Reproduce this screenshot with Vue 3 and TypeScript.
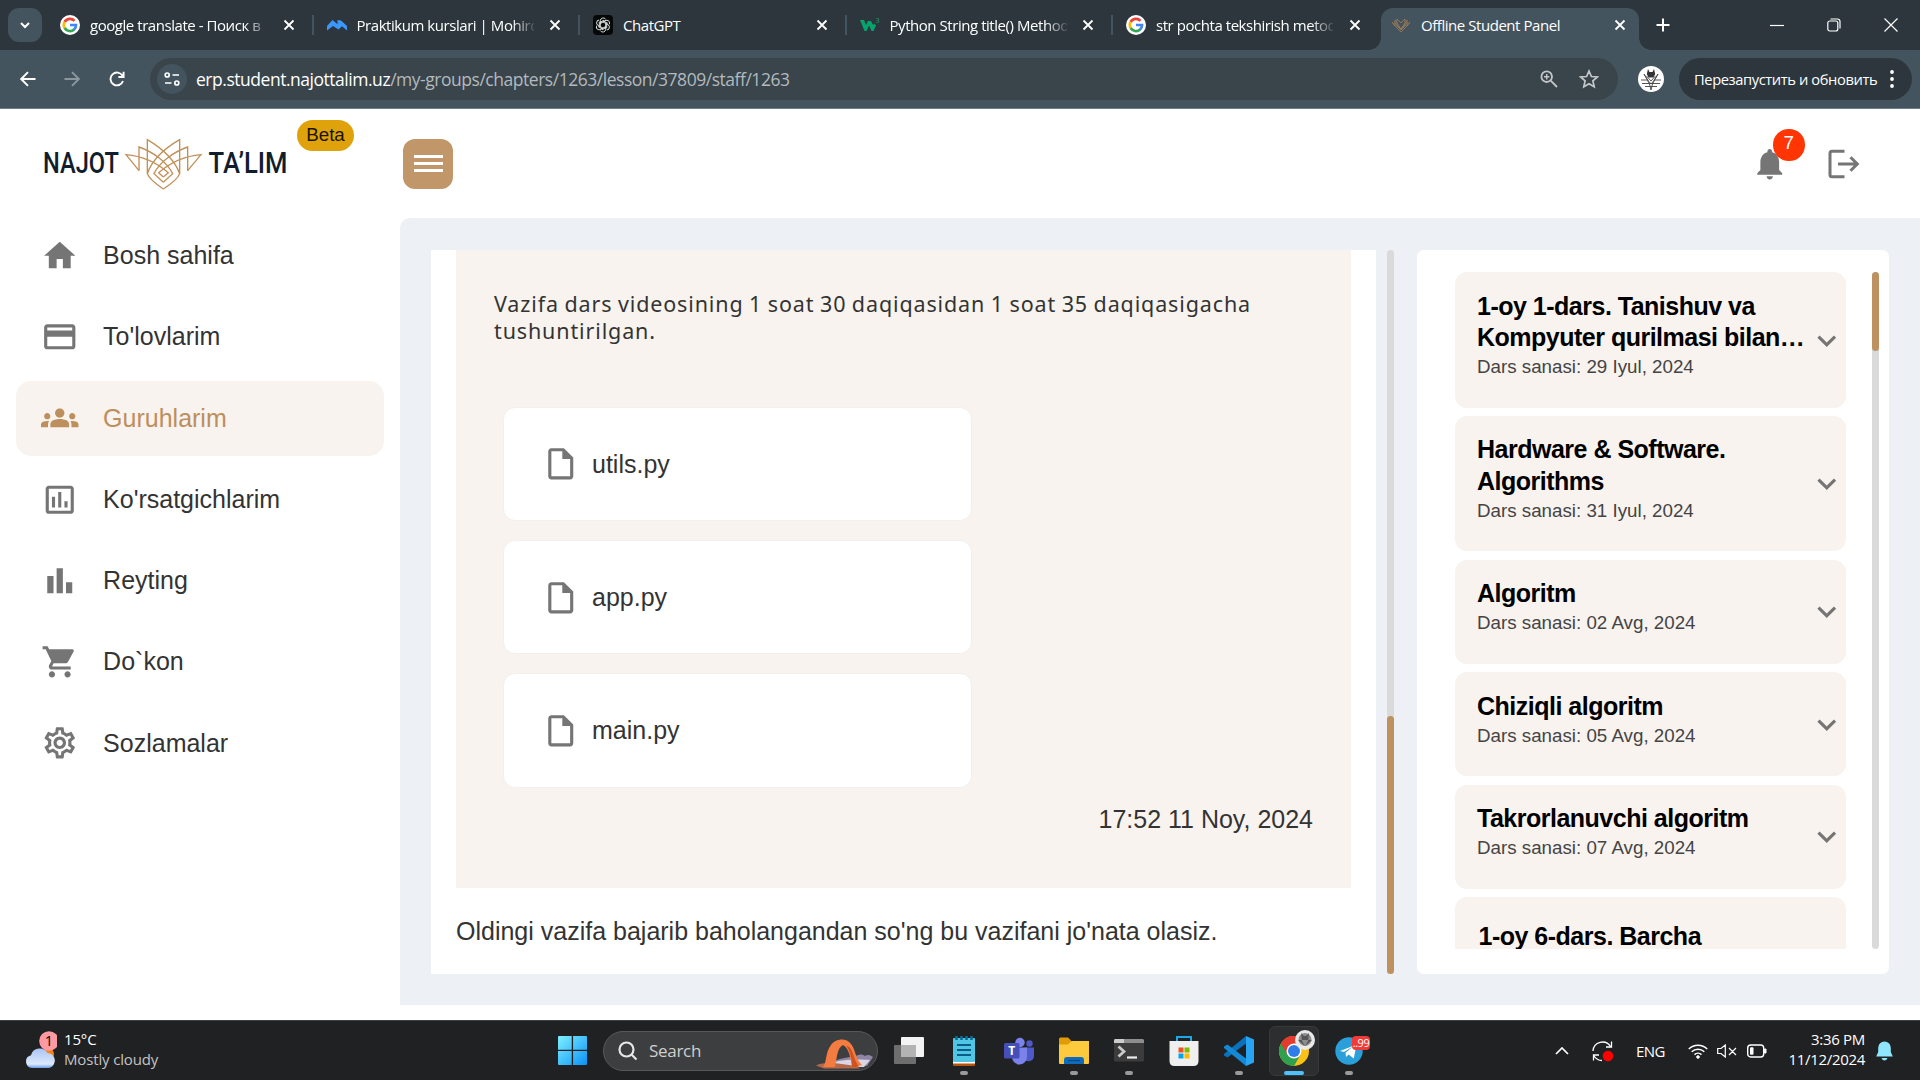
<script setup lang="ts">
interface Tab { title: string; icon: string }
interface NavItem { label: string; path: string; active?: boolean }
interface Lesson { title: string; date: string; low?: boolean }

const tabs: Tab[] = [
  { title: 'google translate - Поиск в', icon: 'google' },
  { title: 'Praktikum kurslari | Mohird', icon: 'mohir' },
  { title: 'ChatGPT', icon: 'gpt' },
  { title: 'Python String title() Method', icon: 'w3' },
  { title: 'str pochta tekshirish metod', icon: 'google' },
]

const nav: NavItem[] = [
  { label: 'Bosh sahifa', path: 'M10 20v-6h4v6h5v-8h3L12 3 2 12h3v8z' },
  { label: "To'lovlarim", path: 'M20 4H4c-1.11 0-1.99.89-1.99 2L2 18c0 1.11.89 2 2 2h16c1.11 0 2-.89 2-2V6c0-1.11-.89-2-2-2zm0 14H4v-6h16v6zm0-10H4V6h16v2z' },
  { label: 'Guruhlarim', active: true, path: 'M12 12.75c1.63 0 3.07.39 4.24.9 1.08.48 1.76 1.56 1.76 2.73V18H6v-1.61c0-1.18.68-2.26 1.76-2.73 1.17-.52 2.61-.91 4.24-.91zM4 13c1.1 0 2-.9 2-2s-.9-2-2-2-2 .9-2 2 .9 2 2 2zm1.13 1.1c-.37-.06-.74-.1-1.13-.1-.99 0-1.93.21-2.78.58C.48 14.9 0 15.62 0 16.43V18h4.5v-1.61c0-.83.23-1.61.63-2.29zM20 13c1.1 0 2-.9 2-2s-.9-2-2-2-2 .9-2 2 .9 2 2 2zm4 3.43c0-.81-.48-1.53-1.22-1.85-.85-.37-1.79-.58-2.78-.58-.39 0-.76.04-1.13.1.4.68.63 1.46.63 2.29V18H24v-1.57zM12 6c1.66 0 3 1.34 3 3s-1.34 3-3 3-3-1.34-3-3 1.34-3 3-3z' },
  { label: "Ko'rsatgichlarim", path: 'M9 17H7v-7h2v7zm4 0h-2V7h2v10zm4 0h-2v-4h2v4zm2 2H5V5h14v14zm0-16H5c-1.100 0-2 .9-2 2v14c0 1.100.9 2 2 2h14c1.100 0 2-.9 2-2V5c0-1.100-.9-2-2-2z' },
  { label: 'Reyting', path: 'M4 9h4v11H4zM10 4h4v16h-4zM16 13h4v7h-4z' },
  { label: 'Do`kon', path: 'M7 18c-1.1 0-1.99.9-1.99 2S5.9 22 7 22s2-.9 2-2-.9-2-2-2zM1 2v2h2l3.6 7.59-1.35 2.45c-.16.28-.25.61-.25.96 0 1.1.9 2 2 2h12v-2H7.42c-.14 0-.25-.11-.25-.25l.03-.12.9-1.63h7.45c.75 0 1.41-.41 1.75-1.03l3.58-6.49A1.003 1.003 0 0 0 20 4H5.21l-.94-2H1zm16 16c-1.1 0-1.99.9-1.99 2s.89 2 1.99 2 2-.9 2-2-.9-2-2-2z' },
  { label: 'Sozlamalar', path: 'M19.43 12.98c.04-.32.07-.64.07-.98 0-.34-.03-.66-.07-.98l2.11-1.65c.19-.15.24-.42.12-.64l-2-3.46c-.09-.16-.26-.25-.44-.25-.06 0-.12.01-.17.03l-2.49 1c-.52-.4-1.08-.73-1.69-.98l-.38-2.65C14.46 2.18 14.25 2 14 2h-4c-.25 0-.46.18-.49.42l-.38 2.65c-.61.25-1.17.59-1.69.98l-2.49-1c-.06-.02-.12-.03-.18-.03-.17 0-.34.09-.43.25l-2 3.46c-.13.22-.07.49.12.64l2.11 1.65c-.04.32-.07.65-.07.98 0 .33.03.66.07.98l-2.11 1.65c-.19.15-.24.42-.12.64l2 3.46c.09.16.26.25.44.25.06 0 .12-.01.17-.03l2.49-1c.52.4 1.08.73 1.69.98l.38 2.65c.03.24.24.42.49.42h4c.25 0 .46-.18.49-.42l.38-2.65c.61-.25 1.17-.59 1.69-.98l2.49 1c.06.02.12.03.18.03.17 0 .34-.09.43-.25l2-3.46c.12-.22.07-.49-.12-.64l-2.11-1.65zm-1.98-1.71c.04.31.05.52.05.73 0 .21-.02.43-.05.73l-.14 1.13.89.7 1.08.84-.7 1.21-1.27-.51-1.04-.42-.9.68c-.43.32-.84.56-1.25.73l-1.06.43-.16 1.13-.2 1.35h-1.4l-.19-1.35-.16-1.13-1.06-.43c-.43-.18-.83-.41-1.23-.71l-.91-.7-1.06.43-1.27.51-.7-1.21 1.08-.84.89-.7-.14-1.13c-.03-.31-.05-.54-.05-.74s.02-.43.05-.73l.14-1.13-.89-.7-1.08-.84.7-1.21 1.27.51 1.04.42.9-.68c.43-.32.84-.56 1.25-.73l1.06-.43.16-1.13.2-1.35h1.39l.19 1.35.16 1.13 1.06.43c.43.18.83.41 1.23.71l.91.7 1.06-.43 1.27-.51.7 1.21-1.07.85-.89.7.14 1.13zM12 8c-2.21 0-4 1.79-4 4s1.79 4 4 4 4-1.79 4-4-1.79-4-4-4zm0 6c-1.1 0-2-.9-2-2s.9-2 2-2 2 .9 2 2-.9 2-2 2z' },
]

const files: string[] = ['utils.py', 'app.py', 'main.py']

const lessons: Lesson[] = [
  { title: '1-oy 1-dars. Tanishuv va Kompyuter qurilmasi bilan…', date: '29 Iyul, 2024' },
  { title: 'Hardware & Software. Algorithms', date: '31 Iyul, 2024' },
  { title: 'Algoritm', date: '02 Avg, 2024' },
  { title: 'Chiziqli algoritm', date: '05 Avg, 2024' },
  { title: 'Takrorlanuvchi algoritm', date: '07 Avg, 2024' },
  { title: '1-oy 6-dars. Barcha', date: '09 Avg, 2024', low: true },
]
</script>

<template>
  <div class="screen">
    <!-- browser tabs -->
    <div class="tabstrip">
      <div class="tab-search">
        <svg width="14" height="14" viewBox="0 0 14 14"><path d="M3 5l4 4 4-4" fill="none" stroke="#fff" stroke-width="2" /></svg>
      </div>
      <div v-for="(t, i) in tabs" :key="t.title" class="tab" :class="{ first: i === 0, last: i === 4 }">
        <svg v-if="t.icon === 'google'" class="fav" viewBox="0 0 20 20">
          <circle cx="10" cy="10" r="10" fill="#fff" />
          <g fill="none" stroke-width="2.700">
            <path d="M4.650 7A6.100 6.100 0 0 1 14.500 5.800" stroke="#ea4335" />
            <path d="M4.700 13.050A6.100 6.100 0 0 1 4.650 6.950" stroke="#fbbc05" />
            <path d="M14.100 14.500A6.100 6.100 0 0 1 4.650 13" stroke="#34a853" />
            <path d="M10 10H16A6.100 6.100 0 0 1 13.900 14.700" stroke="#4285f4" />
          </g>
        </svg>
        <svg v-else-if="t.icon === 'mohir'" class="fav" viewBox="0 0 20 20">
          <path d="M0 15.500V11L5.500 5l5 4.300V5L14 5.500l6 5.500v4.500l-5-4.200-3.500 3.200L6 11z" fill="#3b97fb" />
        </svg>
        <svg v-else-if="t.icon === 'gpt'" class="fav" viewBox="0 0 20 20">
          <rect width="20" height="20" rx="4" fill="#060808" />
          <g fill="none" stroke="#d8dcdd" stroke-width="1">
            <path v-for="a in 6" :key="a" :transform="`rotate(${a * 60} 10 10)`" d="M7.300 8.500V5.600a2.900 2.900 0 0 1 5.200-1.500M10 6.900l3.700 2.100v4.300" />
          </g>
        </svg>
        <svg v-else class="fav" viewBox="0 0 20 20">
          <path d="M0 5h4l2 5 2-4h3l2 4 1-1.500 2 2L13.500 16h-2L9 10.500 6.500 16h-2z" fill="#05a46c" />
          <text x="15.500" y="8" font-size="7" fill="#05a46c" font-family="Noto Sans">3</text>
        </svg>
        <span class="tab-title" :class="{ fade: t.icon !== 'gpt' }">{{ t.title }}</span>
        <svg class="close" viewBox="0 0 12 12"><path d="M1.500 1.500l9 9M10.500 1.500l-9 9" stroke="#fff" stroke-width="1.800" /></svg>
      </div>
      <div class="tab active">
        <svg class="fav" viewBox="0 0 20 20"><g fill="none" stroke="#8f7658" stroke-width="1"><path d="M1 7l3 4V5l6 9 6-9v6l3-4-4 5-5 5-5-5zM6 4v7l4 4 4-4V4l-4 4zM3 7l7 7 7-7" /></g></svg>
        <span class="tab-title">Offline Student Panel</span>
        <svg class="close" viewBox="0 0 12 12"><path d="M1.500 1.500l9 9M10.500 1.500l-9 9" stroke="#fff" stroke-width="1.800" /></svg>
      </div>
      <svg class="plus" viewBox="0 0 14 14"><path d="M7 .5v13M.5 7h13" stroke="#fff" stroke-width="2" /></svg>
      <div class="winctl">
        <svg width="14" height="14" viewBox="0 0 14 14"><path d="M0 7.500h14" stroke="#fff" stroke-width="1.200" /></svg>
        <svg width="14" height="14" viewBox="0 0 14 14"><path d="M3.500 1h7a2.500 2.500 0 0 1 2.500 2.500v7" fill="none" stroke="#fff" stroke-width="1.200" /><rect x=".8" y="3" width="10" height="10" rx="2" fill="none" stroke="#fff" stroke-width="1.200" /></svg>
        <svg width="14" height="14" viewBox="0 0 14 14"><path d="M.5.5l13 13M13.500.5l-13 13" stroke="#fff" stroke-width="1.200" /></svg>
      </div>
    </div>

    <!-- address bar -->
    <div class="toolbar">
      <svg class="tb back" viewBox="0 0 16 16"><path d="M15.500 8H1.500M8 1.200L1.200 8 8 14.800" fill="none" stroke="#fff" stroke-width="1.900" /></svg>
      <svg class="tb fwd" viewBox="0 0 16 16"><path d="M.5 8h14M8 1.200L14.800 8 8 14.800" fill="none" stroke="#8a979e" stroke-width="1.900" /></svg>
      <svg class="tb rel" viewBox="0 0 16 16"><path d="M14 10A6.400 6.400 0 1 1 13.500 4.800M14.600 .8V6H9.400" fill="none" stroke="#fff" stroke-width="1.900" /></svg>
      <div class="omni">
        <div class="site">
          <svg width="16" height="16" viewBox="0 0 16 16" fill="none" stroke="#fff" stroke-width="1.700"><circle cx="3.200" cy="4" r="2" /><path d="M8.500 4H15M1 12h6.500" /><circle cx="12.800" cy="12" r="2" /></svg>
        </div>
        <div class="url"><b>erp.student.najottalim.uz</b>/my-groups/chapters/1263/lesson/37809/staff/1263</div>
        <svg class="mag" viewBox="0 0 18 18" fill="none" stroke="#c4c7c9" stroke-width="1.800"><circle cx="6.700" cy="6.700" r="5.300" /><path d="M10.700 10.700L17 17" /><path d="M6.700 4v5.400M4 6.700h5.400" stroke-width="1.500" /></svg>
        <svg class="star" viewBox="0 0 20 20"><path d="M10 2l2.400 5.500 6 .5-4.500 3.900 1.300 5.900L10 14.700l-5.200 3.100 1.300-5.900L1.600 8l6-.5z" fill="none" stroke="#c4c7c9" stroke-width="1.700" /></svg>
      </div>
      <svg class="avatar" viewBox="0 0 26 26">
        <circle cx="13" cy="13" r="13" fill="#fff" />
        <path d="M10 3l1.500 3h3L16 3l1.200 5-1.700 3.500h-5L8.800 8z" fill="#333" />
        <path d="M6 8l5.500 10 1.500 6 1.500-6L20 8l-4.500 7-2.500 3-2.500-3zM3 14h6M17 14h6M4 17.500h18M7 20.500h12M8.500 10l4.500 5 4.500-5" fill="none" stroke="#444" stroke-width=".9" />
      </svg>
      <div class="update"><span>Перезапустить и обновить</span>
        <svg width="4" height="18" viewBox="0 0 4 18" fill="#fff"><circle cx="2" cy="2" r="1.900" /><circle cx="2" cy="9" r="1.900" /><circle cx="2" cy="16" r="1.900" /></svg>
      </div>
    </div>

    <!-- web page -->
    <div class="page">
      <aside class="side">
        <div class="brand">
          <svg class="logo" width="244" height="56" viewBox="0 0 244 56">
            <g font-family="Roboto, sans-serif" font-size="29" font-weight="500" fill="#101d2d">
              <text x="-1" y="36" textLength="76" lengthAdjust="spacingAndGlyphs">NAJOT</text>
              <text x="164.500" y="36" textLength="79" lengthAdjust="spacingAndGlyphs">TA’LIM</text>
            </g>
            <!-- lotus mark: three mirrored petals over a nested diamond -->
            <g transform="translate(-44 -29) scale(.33333)" fill="none" stroke="#c1905a" stroke-width="4">
              <path d="M417 188L378 140C425 144 470 164 505 194L490 207" />
              <path d="M417 188V117C460 132 500 162 518 197L490 223" />
              <path d="M490 243C462 224 446 210 442 197V95C486 121 524 156 539 197C535 210 519 224 490 243" />
              <path d="M563 188L603 140C555 144 511 164 476 194L490 207" />
              <path d="M563 188V117C520 132 480 162 462 197L490 223" />
              <path d="M539 197V95C494 121 456 156 442 197" />
            </g>
          </svg>
          <span class="beta">Beta</span>
        </div>
        <nav>
          <div v-for="n in nav" :key="n.label" class="nav" :class="{ on: n.active }">
            <svg viewBox="0 0 24 24"><path :d="n.path" fill="currentColor" /></svg>
            <span>{{ n.label }}</span>
          </div>
        </nav>
      </aside>

      <div class="main">
        <header>
          <div class="burger"><i /><i /><i /></div>
          <div class="bell">
            <svg viewBox="0 0 24 24"><path d="M12 22c1.100 0 2-.9 2-2h-4c0 1.100.89 2 2 2zm6-6v-5c0-3.070-1.640-5.640-4.500-6.320V4c0-.83-.67-1.500-1.500-1.500s-1.500.67-1.500 1.500v.68C7.630 5.360 6 7.920 6 11v5l-2 2v1h16v-1l-2-2z" fill="#757575" /></svg>
            <span class="count">7</span>
          </div>
          <svg class="exit" viewBox="0 0 32 30"><g fill="none" stroke="#757575" stroke-width="3"><path d="M16.500 2.200H4Q2 2.200 2 4.200v21.600q0 2 2 2h12.500" /><path d="M10 15h19M22.500 8.300L29.300 15l-6.800 6.700" /></g></svg>
        </header>

        <div class="work">
          <section class="lesson">
            <div class="task">
              <p>Vazifa dars videosining 1 soat 30 daqiqasidan 1 soat 35 daqiqasigacha<br>tushuntirilgan.</p>
              <div class="files">
                <div v-for="f in files" :key="f" class="file">
                  <svg viewBox="0 0 24 24"><path d="M14 2H6c-1.100 0-1.990.9-1.990 2L4 20c0 1.100.89 2 1.990 2H18c1.100 0 2-.9 2-2V8l-6-6zM6 20V4h7v5h5v11H6z" fill="#757575" /></svg>
                  <span>{{ f }}</span>
                </div>
              </div>
              <div class="stamp">17:52 11 Noy, 2024</div>
            </div>
            <div class="note">Oldingi vazifa bajarib baholangandan so'ng bu vazifani jo'nata olasiz.</div>
          </section>
          <div class="bar bar-a"><i /></div>
          <section class="course">
            <div class="list">
              <div v-for="l in lessons" :key="l.title" class="item" :class="{ low: l.low }">
                <div class="txt">
                  <div class="title">{{ l.title }}</div>
                  <div class="date">Dars sanasi: {{ l.date }}</div>
                </div>
                <svg viewBox="0 0 24 24"><path d="M16.590 8.590L12 13.170 7.410 8.590 6 10l6 6 6-6z" fill="#757575" /></svg>
              </div>
            </div>
            <div class="bar bar-b"><i /></div>
          </section>
        </div>
      </div>
    </div>

    <!-- taskbar -->
    <div class="taskbar">
      <div class="weather">
        <svg width="32" height="40" viewBox="0 0 32 40">
          <defs><linearGradient id="cl" x1="0" y1="0" x2="0" y2="1"><stop offset="0" stop-color="#a9c4f5" /><stop offset=".8" stop-color="#dce9fd" /><stop offset="1" stop-color="#6b9bea" /></linearGradient></defs>
          <circle cx="23" cy="23" r="6" fill="#f7820f" />
          <path d="M7 37a6.500 6.500 0 0 1-1-12.800A9 9 0 0 1 22.500 22 7.600 7.600 0 0 1 24 37z" fill="url(#cl)" />
          <circle cx="24" cy="10" r="9.800" fill="#ff9aa2" />
          <text x="24" y="15.300" text-anchor="middle" font-size="14.500" fill="#111" font-family="Noto Sans">1</text>
        </svg>
        <div class="wtxt"><div>15°C</div><div class="dim">Mostly cloudy</div></div>
      </div>
      <svg class="start" viewBox="0 0 30 30"><defs><linearGradient id="ws" x1="0" y1="0" x2="1" y2="1"><stop offset="0" stop-color="#7ff0ff" /><stop offset="1" stop-color="#0a92f8" /></linearGradient></defs><path d="M1 0H14.200V14.200H0V1Q0 0 1 0zM15.600 0H29Q30 0 30 1V14.200H15.600zM0 15.600H14.200V30H1Q0 30 0 29zM15.600 15.600H30V29Q30 30 29 30H15.600z" fill="url(#ws)" /></svg>
      <div class="search">
        <svg width="20" height="20" viewBox="0 0 20 20" fill="none" stroke="#e6e6e6" stroke-width="2.200"><circle cx="8.500" cy="8.500" r="7" /><path d="M13.500 13.500l5 5" /></svg>
        <span>Search</span>
        <svg class="arch" width="58" height="32" viewBox="0 0 58 32">
          <path d="M18 24c8-3 16-4 22-5 4-2 6-2 9 0 3-2 5-1 8 1l-6 9z" fill="#8f86a6" />
          <path d="M12 27c12-5 32-5 42-4l-6 7H14z" fill="#dcd5e4" />
          <path d="M0 28.500c5-2.500 14-3 22-2l18 2.500 4 2.500H8z" fill="#b5694a" />
          <path d="M7 30C11 25 9 16 15 8c4-6 15-8 20-1 5 6 4 15 11 21l-10 3C35 22 33 11 27 8c-6 3-6 12-8 22z" fill="#f47c40" />
          <path d="M36 30.500c0-9-2-17-6-22l4 2c4 6 4 13 9 19z" fill="#cf5222" />
        </svg>
      </div>
      <div class="apps">
        <div class="app"><svg viewBox="0 0 30 30"><rect x="0" y="9" width="22" height="19" rx="1" fill="#6e6e6e" /><rect x="7" y="1" width="23" height="20" rx="1" fill="#f3f3f3" /><rect x="7" y="9" width="15" height="12" fill="#b3b3b3" /></svg></div>
        <div class="app run"><svg viewBox="0 0 30 30"><rect x="4" y="25" width="22" height="5" rx="1" fill="#b4560c" /><rect x="4" y="25" width="22" height="2.500" fill="#fff" /><rect x="4" y="2" width="22" height="24" rx="1" fill="#4fc6e4" /><path d="M8 9h14M8 14h14M8 19h14" stroke="#0b5d83" stroke-width="2" /><path d="M7.500 0v4M12.500 0v4M17.500 0v4M22.500 0v4" stroke="#0b6c95" stroke-width="2.600" /></svg></div>
        <div class="app"><svg viewBox="0 0 30 30"><circle cx="16" cy="6.500" r="4.700" fill="#7b83eb" /><circle cx="25.500" cy="7.500" r="3.200" fill="#5059c9" /><path d="M21 11.500h9V20a5.500 5.500 0 0 1-9 4z" fill="#5059c9" /><path d="M8 11.500h15V21a7.500 7.500 0 0 1-15 0z" fill="#7b83eb" /><rect y="7" width="15.500" height="15.500" rx="1.500" fill="#464eb8" /><text x="7.700" y="19" font-size="12" font-weight="700" fill="#fff" text-anchor="middle" font-family="Noto Sans">T</text></svg></div>
        <div class="app run"><svg viewBox="0 0 30 30"><path d="M0 3q0-1.500 1.500-1.500H9l3 3v6H0z" fill="#e19c05" /><path d="M0 8.500h9l3.500-3.500H30v22q0 1-1 1H1q-1 0-1-1z" fill="#fdca3e" /><path d="M5 28v-4q0-3 3-3h14q3 0 3 3v4z" fill="#0f6cbd" /><path d="M9 24.500h12" stroke="#0a4a82" stroke-width="1.400" /></svg></div>
        <div class="app run"><svg viewBox="0 0 30 30"><rect y="3" width="30" height="22.500" rx="1.500" fill="#3c3c3c" /><path d="M0 7V4.500Q0 3 1.500 3h27Q30 3 30 4.500V7z" fill="#8e8e8e" /><path d="M0 7V4.500Q0 3 1.500 3H10v4z" fill="#ccc" /><path d="M4.500 10.500l5.500 5-5.500 5" fill="none" stroke="#c9c9c9" stroke-width="2.800" /><path d="M13 21.500h10" stroke="#eee" stroke-width="2.200" /></svg></div>
        <div class="app"><svg viewBox="0 0 30 30"><path d="M8 6V1h14v5" fill="none" stroke="#1ca8ea" stroke-width="2" /><path d="M.5 5h29v20q0 5-5 5h-19q-5 0-5-5z" fill="#efefef" /><path fill="#f25022" d="M9.500 11.500h5v5h-5z" /><path fill="#7fba00" d="M15.500 11.500h5v5h-5z" /><path fill="#00a4ef" d="M9.500 17.500h5v5h-5z" /><path fill="#ffb900" d="M15.500 17.500h5v5h-5z" /></svg></div>
        <div class="app run"><svg viewBox="0 0 30 30"><path d="M22 0v7.500L3.500 21.500 0 19.500V18z" fill="#0a72bd" /><path d="M22 30v-7.500L3.500 8.500 0 10.500V12z" fill="#1489d6" /><path d="M22 0l8 3.500v23L22 30z" fill="#27a4f2" /></svg></div>
        <div class="app cur">
          <svg viewBox="0 0 30 30"><circle cx="15" cy="15" r="15" fill="#fbc116" /><path d="M15 15L2 7.500A15 15 0 0 1 28 7.500H15z" fill="#e33b2e" /><path d="M15 15L2 7.500A15 15 0 0 0 15 30l6.500-11.200z" fill="#2da14c" /><path d="M15 7.500h13A15 15 0 0 0 2 7.500l6.500 11.200z" fill="#e33b2e" /><circle cx="15" cy="15" r="7.500" fill="#fff" /><circle cx="15" cy="15" r="6" fill="#2f7de9" /></svg>
          <svg class="mini" viewBox="0 0 20 20"><circle cx="10" cy="10" r="10" fill="#e9e9e9" /><circle cx="10" cy="9.500" r="6.500" fill="#8d8d8d" /><path d="M6 3l3 3h2l3-3-1 8-3 5-3-5zM3 10l7 6 7-6" fill="#555" /></svg>
        </div>
        <div class="app run tg">
          <svg viewBox="0 0 30 30"><circle cx="15" cy="15" r="13.700" fill="#2a9fda" /><path d="M6 15l16.500-6.500-2.700 14-5.200-4-2.600 2.500-.4-4.200 7.400-6.300-9 5.500z" fill="#fff" /></svg>
          <span class="tgn">..99</span>
        </div>
      </div>
      <div class="tray">
        <svg class="t1" width="14" height="8" viewBox="0 0 14 8"><path d="M1 7l6-6 6 6" fill="none" stroke="#fff" stroke-width="1.700" /></svg>
        <svg class="t2" width="22" height="22" viewBox="0 0 22 22"><path d="M1 11A9.500 9.500 0 0 1 18.500 6.500M19.500 1.500V7H14M1.500 20.500V15H7M2 16a9.500 9.500 0 0 0 8 4.500" fill="none" stroke="#fff" stroke-width="1.300" /><circle cx="16" cy="16" r="5.300" fill="#f00" /></svg>
        <span class="lang">ENG</span>
        <svg class="t3" width="20" height="16" viewBox="0 0 20 16" fill="none" stroke="#fff" stroke-width="1.500"><path d="M.8 6a13 13 0 0 1 18.400 0M3.700 8.800a9 9 0 0 1 12.600 0M6.500 11.600a5 5 0 0 1 7 0" /><circle cx="10" cy="14" r="1.300" fill="#fff" stroke-width="1" /></svg>
        <svg class="t4" width="20" height="14" viewBox="0 0 20 14" fill="none" stroke="#fff" stroke-width="1.200"><path d="M.7 4.500H4L8.300 1v12L4 9.500H.7zM12 4l7 7M19 4l-7 7" /></svg>
        <svg class="t5" width="20" height="14" viewBox="0 0 20 14"><rect x=".7" y="1" width="16" height="12" rx="3" fill="none" stroke="#fff" stroke-width="1.400" /><rect x="3" y="3.300" width="3.500" height="7.400" rx="1" fill="#fff" /><path d="M17.500 5h1.500v4h-1.500z" fill="#fff" stroke="#fff" /></svg>
        <div class="clock"><div>3:36 PM</div><div>11/12/2024</div></div>
        <svg class="t6" width="17" height="20" viewBox="0 0 17 20"><path d="M8.500.5a6.300 6.300 0 0 1 6.300 6.300V11l2 4.500H.2l2-4.500V6.800A6.300 6.300 0 0 1 8.500.5zM5.500 17h6q-1 2.500-3 2.500t-3-2.500z" fill="#8fe5fb" /></svg>
      </div>
    </div>
  </div>
</template>

<style>
body { margin: 0; overflow: hidden; }
</style>

<style scoped>
* { box-sizing: border-box; }
.screen { width: 1920px; height: 1080px; display: flex; flex-direction: column; overflow: hidden; background: #fff; font-family: "Liberation Sans", Arial, sans-serif; }
svg { display: block; flex: none; }
.tabstrip { height: 50px; background: #2c363c; display: flex; align-items: center; flex: none; font-family: "Open Sans", "Noto Sans", sans-serif; }
.tab-search { width: 34px; height: 34px; margin-left: 8px; border-radius: 11px; background: #44545e; display: flex; align-items: center; justify-content: center; }
.tab { width: 266.500px; height: 20px; display: flex; align-items: center; padding-left: 13px; border-right: 2px solid #44545e; flex: none; }
.tab.first { width: 271.500px; padding-left: 18px; }
.tab.last { border-right: 0; width: 267px; }
.fav { width: 20px; height: 20px; }
.tab-title { width: 177px; margin-left: 10px; font-size: 15px; letter-spacing: -.45px; line-height: 20px; color: #fff; white-space: nowrap; overflow: hidden; }
.tab-title.fade { -webkit-mask-image: linear-gradient(90deg, #000 155px, transparent 180px); mask-image: linear-gradient(90deg, #000 155px, transparent 180px); }
.close { width: 12px; height: 12px; margin-left: 15.500px; }
.tab.active { position: relative; height: 42px; width: 258px; align-self: flex-end; background: #44545e; border: 0; border-radius: 12px 12px 0 0; padding-left: 10px; margin-left: 1px; padding-bottom: 8px; }
.tab.active::before, .tab.active::after { content: ""; position: absolute; bottom: 0; width: 12px; height: 12px; }
.tab.active::before { left: -12px; background: radial-gradient(circle at 0 0, transparent 11.500px, #44545e 12px); }
.tab.active::after { right: -12px; background: radial-gradient(circle at 100% 0, transparent 11.500px, #44545e 12px); }
.plus { width: 14px; height: 14px; margin-left: 17px; }
.winctl { margin-left: auto; margin-right: 22px; display: flex; gap: 43px; }
.toolbar { height: 59px; background: #44545e; border-bottom: 1px solid #6f7c85; display: flex; align-items: center; flex: none; font-family: "Open Sans", "Noto Sans", sans-serif; }
.tb { width: 16px; height: 16px; }
.back { margin-left: 20px; }
.fwd { margin-left: 28px; }
.rel { margin-left: 29px; }
.omni { width: 1468px; height: 42px; margin-left: 25px; background: #39444b; border-radius: 21px; display: flex; align-items: center; }
.site { width: 30px; height: 30px; margin-left: 6.500px; border-radius: 15px; background: #44545e; display: flex; align-items: center; justify-content: center; }
.url { margin-left: 9.500px; flex: 1; font-size: 17.500px; letter-spacing: -.47px; color: #b3b9bd; white-space: nowrap; }
.url b { font-weight: 400; color: #fff; }
.mag { width: 18px; height: 18px; margin-right: 21px; }
.star { width: 20px; height: 20px; margin-right: 19px; }
.avatar { width: 26px; height: 26px; margin-left: 20px; }
.update { width: 233px; height: 42px; margin-left: 15px; border-radius: 21px; background: #2c363c; display: flex; align-items: center; color: #fff; font-size: 14.700px; letter-spacing: -.4px; padding-left: 15px; white-space: nowrap; }
.update span { width: 196px; }
.page { height: 911px; display: flex; flex: none; background: #fff; }
.side { width: 400px; }
.brand { height: 109.200px; display: flex; align-items: flex-start; }
.logo { margin: 28px 0 0 44px; }
.beta { width: 57px; height: 31px; margin: 11px 0 0 9px; border-radius: 16px; background: #e0a20a; color: #1a1405; font-size: 18.750px; line-height: 30px; text-align: center; }
.nav { width: 368px; height: 75px; margin: 0 0 6.250px 16px; border-radius: 15px; display: flex; align-items: center; color: #757575; font-size: 25px; }
.nav svg { width: 37.500px; height: 37.500px; margin: 0 24.600px 0 25px; }
.nav span { color: #333; }
.nav.on, .nav.on span { color: #bd8f5c; }
.nav.on { background: #f8f3ef; }
.main { width: 1520px; display: flex; flex-direction: column; }
header { height: 109px; display: flex; align-items: center; flex: none; }
.burger { width: 50px; height: 50px; margin-left: 3px; border-radius: 12px; background: #c1976a; display: flex; flex-direction: column; align-items: center; justify-content: center; gap: 4px; }
.burger i { width: 29px; height: 3px; background: #fff; }
.bell { position: relative; margin-left: auto; }
.bell svg { width: 37.500px; height: 37.500px; }
.count { position: absolute; left: 22.500px; top: -15.500px; width: 31.500px; height: 31.500px; border-radius: 50%; background: #ff3503; color: #fff; font-size: 18.750px; line-height: 28px; text-align: center; }
.exit { width: 32px; height: 30px; margin: 0 60px 0 40px; }
.work { height: 787px; background: #edf0f5; border-radius: 10px 0 0 0; padding: 32px 31px; display: flex; flex: none; }
.lesson { width: 945px; height: 724px; background: #fff; padding: 0 25px; }
.task { height: 638px; background: #f8f3ef; padding: 40px 38px 0; display: flex; flex-direction: column; }
.task p { margin: 0; font-family: "Noto Sans", sans-serif; font-size: 21.500px; line-height: 27px; letter-spacing: .87px; word-spacing: -.9px; color: #333; white-space: nowrap; }
.files { margin: 63px 0 0 9px; display: flex; flex-direction: column; gap: 19px; }
.file { width: 469px; height: 114.200px; border: 1px solid #f3efec; border-radius: 12px; background: #fff; display: flex; align-items: center; font-size: 25px; color: #333; }
.file svg { width: 37.500px; height: 37.500px; margin: 0 12.500px 0 38px; }
.stamp { margin-top: 13px; text-align: right; font-size: 25px; line-height: 36px; color: #333; }
.note { margin-top: 25px; font-size: 25px; line-height: 36px; color: #333; white-space: nowrap; }
.bar { width: 7px; border-radius: 4px; background: #dadada; display: flex; flex-direction: column; flex: none; }
.bar i { display: block; border-radius: 4px; background: #bd9160; }
.bar-a { height: 724px; margin: 0 23px 0 11px; justify-content: flex-end; }
.bar-a i { height: 258px; }
.course { width: 472px; height: 724px; background: #fff; border-radius: 7px; padding: 22px 10px 25px 38px; display: flex; justify-content: space-between; }
.list { width: 391px; height: 677px; overflow: hidden; border-radius: 5px 5px 0 0; }
.item { background: #f8f3ef; border-radius: 12px; margin-bottom: 8.050px; padding: 18.500px 1px 26.500px 22px; display: flex; align-items: center; }
.item.low { padding: 23.500px 0 80px 23.500px; }
.item svg { width: 37.500px; height: 37.500px; margin: 9px 0 0; }
.txt { width: 330.500px; }
.title { font-size: 25px; line-height: 31.250px; font-weight: 700; color: #000; letter-spacing: -.5px; }
.date { font-size: 18.750px; line-height: 28.200px; color: #444; }
.bar-b { height: 677px; }
.bar-b i { height: 79px; }
.taskbar { height: 60px; background: #202122; border-top: 1px solid #3d4241; display: flex; align-items: center; flex: none; color: #fff; font-family: "Open Sans", "Noto Sans", sans-serif; }
.weather { width: 533px; margin-left: 25px; display: flex; align-items: center; }
.wtxt { margin: 0 0 3px 7px; font-size: 15px; line-height: 20px; letter-spacing: -.15px; }
.dim { color: #c3c3c3; }
.start { width: 29px; height: 29px; }
.search { width: 275px; height: 40px; margin-left: 16px; border-radius: 20px; background: #3d3e40; border: 1px solid #56585a; display: flex; align-items: center; padding-left: 14px; overflow: hidden; }
.search span { flex: 1; margin-left: 11px; font-size: 17px; color: #cfcfcf; letter-spacing: -.3px; }
.arch { margin: 5px 3px 0 0; }
.apps { display: flex; margin-left: 6px; gap: 5px; }
.app { width: 50px; height: 50px; display: flex; align-items: center; justify-content: center; position: relative; border-radius: 6px; }
.app svg { width: 30px; height: 30px; }
.run::after, .cur::after { content: ""; position: absolute; bottom: 1px; left: 21px; width: 8px; height: 4px; border-radius: 2px; background: #9a9a9a; }
.cur { background: #2d2e30; border: 1px solid #38393b; }
.cur::after { bottom: 0; left: 14px; width: 20px; background: #4cc2ff; }
.app .mini { position: absolute; right: 3px; top: 3px; width: 20px; height: 20px; }
.tgn { position: absolute; right: 4px; top: 10px; width: 18px; height: 14px; border-radius: 4px; background: #f23b36; font-size: 11px; line-height: 13px; text-align: center; letter-spacing: -.5px; }
.tray { margin-left: auto; display: flex; align-items: center; font-size: 15px; }
.t2 { margin: 0 0 0 23px; }
.lang { width: 29px; margin: 0 23px 0 22px; letter-spacing: -.6px; }
.t4 { margin-left: 9px; }
.t5 { margin-left: 10px; }
.clock { width: 80px; margin: 0 11px 3px 18px; text-align: right; line-height: 20px; letter-spacing: -.3px; white-space: nowrap; }
.t6 { margin-right: 27px; }
</style>
